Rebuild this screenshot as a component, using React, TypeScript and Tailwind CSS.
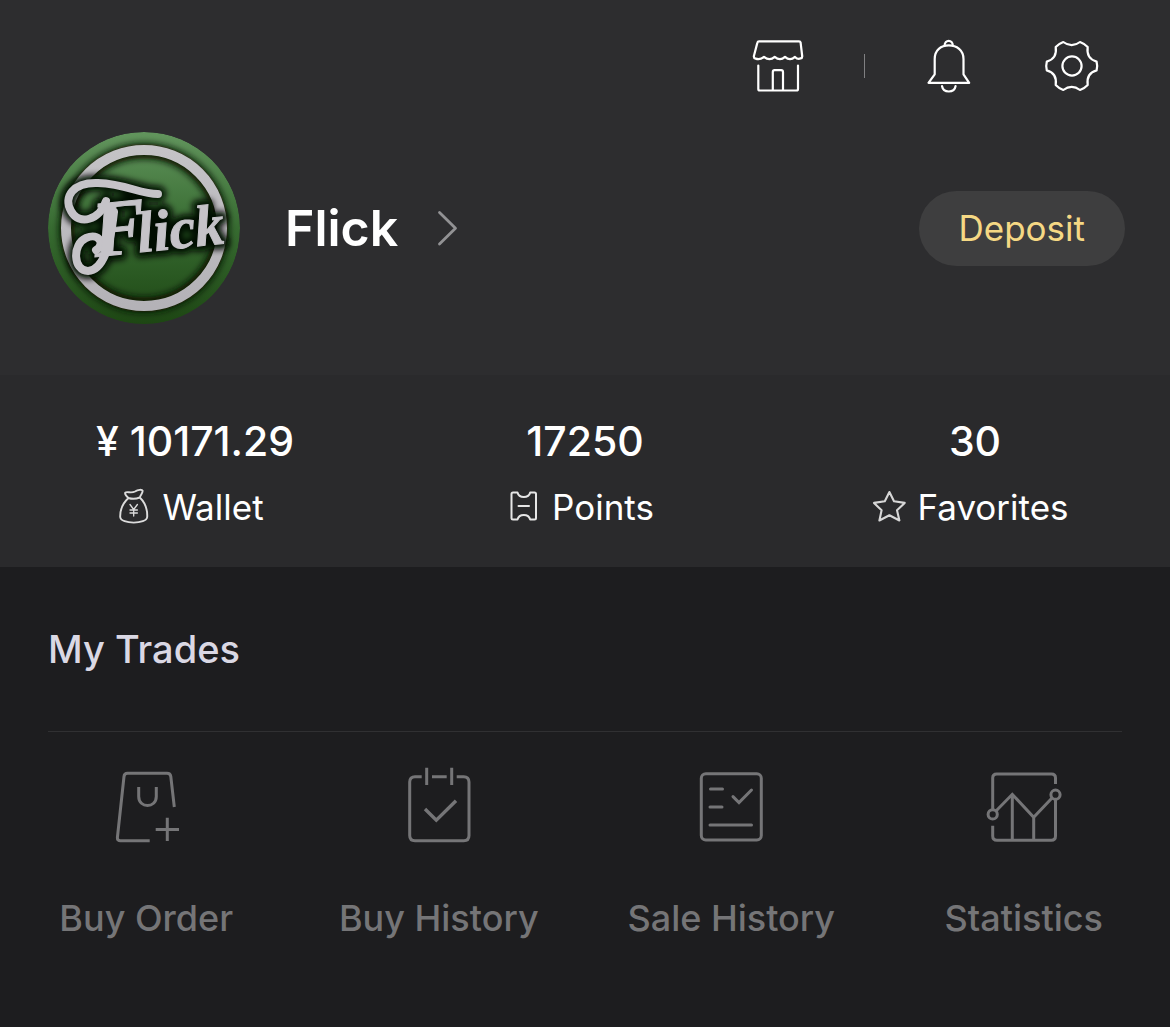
import React from 'react';

const StoreIcon = () => (
  <svg className="h-14 w-14" viewBox="0 0 56 56" fill="none" stroke="#fff" strokeWidth="2.2" strokeLinecap="round" strokeLinejoin="round" aria-hidden="true">
    <path d="M9 3.3H49Q50.3 3.3 50.6 4.6L52.2 18Q52.4 20 50.6 20.4Q47.5 21.6 45 18.9Q40 23.4 35 18.9Q30 23.4 24.7 18.9Q19.6 23.4 14 18.9Q10 22.2 5.6 20.6Q3.6 20.2 3.9 18L7.4 4.6Q7.7 3.3 9 3.3Z" />
    <path d="M8.3 27.5V51Q8.3 52.5 9.8 52.5H46.5Q48 52.5 48 51V27.5M22.8 52V34Q22.8 32.2 24.6 32.2H31.2Q33 32.2 33 34V52" />
  </svg>
);

const BellIcon = () => (
  <svg className="h-14 w-12" viewBox="0 0 48 56" fill="none" stroke="#fff" strokeWidth="2.2" strokeLinejoin="round" strokeLinecap="round" aria-hidden="true">
    <path d="M20.6 7.5C20.6 1.2 28.8 1.2 28.8 7.5" />
    <path d="M10.7 36.3V21C10.7 12 17 7.4 24.8 7.4S39.5 12 39.5 21V36.3L45.2 44.8H4.5ZM18 48C18.6 51.5 21 53.5 24.8 53.5S31 51.5 31.6 48" />
  </svg>
);

const GearIcon = () => (
  <svg className="h-14 w-14" viewBox="0 0 56 56" fill="none" stroke="#fff" strokeWidth="2.2" strokeLinejoin="round" aria-hidden="true">
    <path d="M19.3 4Q27.7 10.4 36 4Q40.5 5.6 43.7 9Q42 20.6 52.6 23.6Q53.8 28 52.6 32.4Q42 35.4 43.7 47Q40.5 50.4 36 52Q27.7 45.6 19.3 52Q14.9 50.4 11.7 47Q13.4 35.4 2.8 32.4Q1.6 28 2.8 23.6Q13.4 20.6 11.7 9Q14.9 5.6 19.3 4Z" />
    <circle cx="28" cy="28" r="9.6" />
  </svg>
);

const Avatar = () => (
  <svg className="size-48 shrink-0" viewBox="0 0 192 192" role="img" aria-label="Flick avatar">
    <defs>
      <linearGradient id="green" x1="0" y1="0" x2="0" y2="1">
        <stop offset="0" stopColor="#62955d" />
        <stop offset="0.5" stopColor="#376b31" />
        <stop offset="1" stopColor="#1d4613" />
      </linearGradient>
      <linearGradient id="silver" x1="0" y1="0" x2="0" y2="1">
        <stop offset="0" stopColor="#c4c3c6" />
        <stop offset="1" stopColor="#b4b2b7" />
      </linearGradient>
      <filter id="soft" x="-20%" y="-20%" width="140%" height="140%">
        <feGaussianBlur stdDeviation="3" />
      </filter>
      <clipPath id="disc">
        <circle cx="96" cy="96" r="96" />
      </clipPath>
      <g id="flourish" fill="none" strokeLinecap="round">
        <path d="M110 62C92 62 78 52 50 51C25 50 15 65 23 79C31 94 52 88 58 69" />
        <path d="M66 80C62 116 55 138 40 139C25 139 24 112 38 106C52 100 57 113 48 118" />
      </g>
      <text id="name" x="47" y="125" fontFamily="Liberation Serif, serif" fontStyle="italic" fontWeight="700" transform="rotate(-6 47 125)">
        <tspan fontSize="80">F</tspan>
        <tspan fontSize="58" dx="-9">lick</tspan>
      </text>
    </defs>
    <g clipPath="url(#disc)">
      <circle cx="96" cy="96" r="96" fill="url(#green)" />
      <circle cx="96" cy="96" r="77" fill="none" stroke="#071306" strokeWidth="16" filter="url(#soft)" />
      <circle cx="96" cy="96" r="78" fill="none" stroke="url(#silver)" strokeWidth="10" />
      <g filter="url(#soft)" fill="#050805" stroke="#050805">
        <use href="#flourish" strokeWidth="16" />
        <use href="#name" strokeWidth="11" strokeLinejoin="round" />
      </g>
      <g fill="#c5c3c8" stroke="#c5c3c8">
        <use href="#flourish" strokeWidth="8" />
        <use href="#name" strokeWidth="1" />
      </g>
    </g>
  </svg>
);

const WalletIcon = () => (
  <svg className="h-[38px] w-8" viewBox="0 0 32 38" fill="none" stroke="#dcdcdc" strokeWidth="1.9" strokeLinejoin="round" strokeLinecap="round" aria-hidden="true">
    <path d="M10.5 10Q6.500 6.500 7.200 4.700C9 3 13 5.800 17 3.500C20 1.600 24 1.200 24.600 2.700C25 4.600 23 6 21.800 9.500Q16 11.800 10.500 10ZM10.500 10C5.500 14.500 2 22 2.200 29C2.800 36.500 28.600 36.500 29.200 29C29.500 22 27 14.500 21.800 9.500" />
    <path d="M12 16.500L15.700 21.500L19.400 16.500M15.700 21.500V28M12 22H19.400M12 25H19.400" strokeWidth="1.300" />
  </svg>
);

const PointsIcon = () => (
  <svg className="h-9 w-8" viewBox="0 0 32 36" fill="none" stroke="#e6e6e6" strokeWidth="2" strokeLinejoin="round" strokeLinecap="round" aria-hidden="true">
    <path d="M3.500 5Q3.500 3.500 5 3.500H9.500C11 9.600 20.600 9.600 22.200 3.500H26.500Q28 3.500 28 5V29Q28 30.500 26.500 30.500H22.200C20.600 24.400 11 24.400 9.500 30.500H5Q3.500 30.500 3.500 29ZM10.500 17H21" />
  </svg>
);

const StarIcon = () => (
  <svg className="h-9 w-8 overflow-visible" viewBox="1 0 32 36" fill="none" stroke="#d6d6d6" strokeWidth="2.1" strokeLinejoin="round" aria-hidden="true">
    <path d="M17.400 3L22 12.300L32.700 13.900L25 21.300L27.400 31.500L17.400 26.200L7.400 31.500L9.600 21.300L2 13.900L12.800 12.300Z" />
  </svg>
);

const TradeSvg = ({ children }: { children: React.ReactNode }) => (
  <svg className="size-20" viewBox="0 0 80 80" fill="none" stroke="#757577" strokeWidth="3" aria-hidden="true">
    {children}
  </svg>
);

const trades = [
  {
    label: 'Buy Order',
    icon: (
      <TradeSvg>
        <path d="M68.300 42L64.800 11.500Q64.300 8.300 61 8.300H21.500Q18.300 8.300 18 11.500L11.400 72.500Q11.200 75.700 14.500 75.700H43.700M32.700 22V31.500C32.700 43.500 50.300 43.500 50.300 31.500V22M61.300 52.700V76M49.700 64.400H73" />
      </TradeSvg>
    ),
  },
  {
    label: 'Buy History',
    icon: (
      <TradeSvg>
        <path d="M22.700 11.700H16Q10.700 11.700 10.700 17V70.500Q10.700 75.700 16 75.700H64.700Q70 75.700 70 70.500V17Q70 11.700 64.700 11.700H57.700M33 11.700H47.700M27.700 2.700V20M52.700 2.700V20" />
        <path d="M26 44L37.300 55.200L57 35.700" strokeWidth="3.4" />
      </TradeSvg>
    ),
  },
  {
    label: 'Sale History',
    icon: (
      <TradeSvg>
        <rect x="10.300" y="8.700" width="60" height="66.300" rx="4.500" />
        <path d="M19.500 24H31.500M19 42H31M19 60H60.500M42 31.600L48 37.600L60.500 25" strokeLinecap="round" />
      </TradeSvg>
    ),
  },
  {
    label: 'Statistics',
    icon: (
      <TradeSvg>
        <path d="M8.700 44.500V13Q8.700 9 12.700 9H67.500Q71.500 9 71.500 13V19M8.700 60.700V71Q8.700 75.300 13 75.300H67.300Q71.500 75.300 71.500 71V34.500M12 46L28.300 29.300L49.700 52.300L68 33M28.300 29.300V75M49.700 52.300V75" />
        <circle cx="8.700" cy="49.400" r="4.600" />
        <circle cx="71.500" cy="29.700" r="4.600" />
      </TradeSvg>
    ),
  },
];

const stats = [
  { value: '¥ 10171.29', label: 'Wallet', icon: <WalletIcon /> },
  { value: '17250', label: 'Points', icon: <PointsIcon /> },
  { value: '30', label: 'Favorites', icon: <StarIcon /> },
];

export default function App() {
  return (
    <main className="min-h-screen bg-[#1d1d1f] font-['Inter',sans-serif] text-white">
      <header className="bg-[#2d2d2f] pt-[38px] pb-[51px]">
        <nav className="flex items-center justify-end pr-[70px]" aria-label="Account">
          <button type="button" aria-label="Store"><StoreIcon /></button>
          <span className="mr-[59px] ml-[58px] h-6 w-px bg-[#808082]" />
          <button type="button" aria-label="Notifications"><BellIcon /></button>
          <button type="button" aria-label="Settings" className="ml-[72px]"><GearIcon /></button>
        </nav>
        <div className="mt-[38px] flex items-center justify-between pr-[45px] pl-12">
          <a href="#profile" className="flex items-center">
            <Avatar />
            <h1 className="ml-[45px] text-[50px] leading-[60px] font-semibold">Flick</h1>
            <svg className="ml-9 h-10 w-6" viewBox="0 0 24 40" fill="none" stroke="#929294" strokeWidth="2.8" strokeLinecap="round" strokeLinejoin="round" aria-hidden="true">
              <path d="M5.500 4.500L21.500 20.300L5.500 36" />
            </svg>
          </a>
          <button type="button" className="h-[75px] rounded-full bg-[#3e3e3f] px-10 text-[35px] leading-[44px] text-[#f5d884]">Deposit</button>
        </div>
      </header>

      <section className="grid grid-cols-3 bg-[#2a2a2c] pt-10 pb-9" aria-label="Balances">
        {stats.map((s) => (
          <a key={s.label} href={'#' + s.label.toLowerCase()} className="flex flex-col items-center gap-4">
            <strong className="text-[41px] leading-[52px] font-medium">{s.value}</strong>
            <span className="flex h-12 items-center gap-3 pr-2 text-[35px] leading-[44px]">
              {s.icon}
              {s.label}
            </span>
          </a>
        ))}
      </section>

      <section>
        <h2 className="mx-12 border-b border-[#303032] pt-[58px] pb-[58px] text-[38px] leading-[48px] font-medium text-[#dad8e4]">My Trades</h2>
        <div className="grid grid-cols-4 pt-[33px] pb-20">
          {trades.map((t) => (
            <button key={t.label} type="button" className="flex flex-col items-center gap-[51px] text-[36px] leading-[44px] font-medium text-[#757577]">
              {t.icon}
              {t.label}
            </button>
          ))}
        </div>
      </section>
    </main>
  );
}
